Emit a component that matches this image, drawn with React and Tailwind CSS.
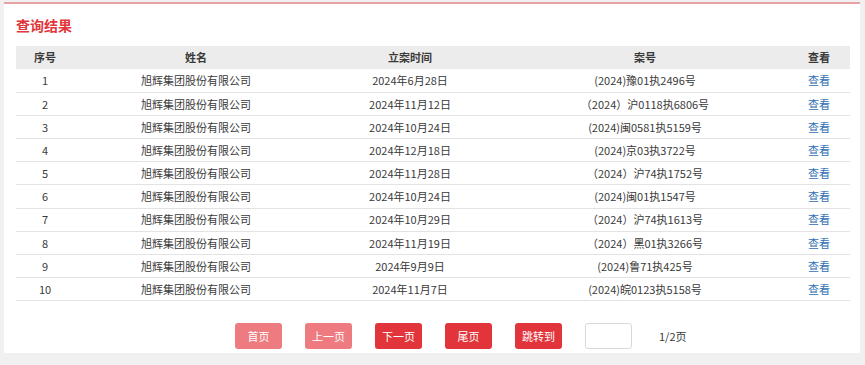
const rows = [
  ["1", "旭辉集团股份有限公司", "2024年6月28日", "(2024)豫01执2496号"],
  ["2", "旭辉集团股份有限公司", "2024年11月12日", "（2024）沪0118执6806号"],
  ["3", "旭辉集团股份有限公司", "2024年10月24日", "(2024)闽0581执5159号"],
  ["4", "旭辉集团股份有限公司", "2024年12月18日", "(2024)京03执3722号"],
  ["5", "旭辉集团股份有限公司", "2024年11月28日", "（2024）沪74执1752号"],
  ["6", "旭辉集团股份有限公司", "2024年10月24日", "(2024)闽01执1547号"],
  ["7", "旭辉集团股份有限公司", "2024年10月29日", "（2024）沪74执1613号"],
  ["8", "旭辉集团股份有限公司", "2024年11月19日", "（2024）黑01执3266号"],
  ["9", "旭辉集团股份有限公司", "2024年9月9日", "(2024)鲁71执425号"],
  ["10", "旭辉集团股份有限公司", "2024年11月7日", "(2024)皖0123执5158号"],
];

const pageButtons = [
  { label: "首页", disabled: true },
  { label: "上一页", disabled: true },
  { label: "下一页", disabled: false },
  { label: "尾页", disabled: false },
  { label: "跳转到", disabled: false },
];

export default function App() {
  return (
    <div
      className="h-[365px] w-[865px] overflow-hidden bg-[#f0f0f0] pl-1 pr-[5px] pt-[2px] text-[#3a3a3a]"
      style={{ fontFamily: '"Microsoft YaHei", "Noto Sans CJK SC", sans-serif' }}
    >
      <div className="h-[351px] border-t-2 border-[#e8a2a2] bg-white">
        <h2 className="pl-3 pt-[9px] text-[14px] font-bold leading-6 text-[#e0363c]">查询结果</h2>

        <table className="ml-3 mt-[9px] w-[834px] table-fixed border-collapse text-[11px]">
          <colgroup>
            <col className="w-[58px]" />
            <col className="w-[244px]" />
            <col className="w-[184px]" />
            <col className="w-[286px]" />
            <col className="w-[62px]" />
          </colgroup>
          <thead>
            <tr className="h-[23px] bg-[#ececec]">
              <th className="font-bold">序号</th>
              <th className="font-bold">姓名</th>
              <th className="font-bold">立案时间</th>
              <th className="font-bold">案号</th>
              <th className="font-bold">查看</th>
            </tr>
          </thead>
          <tbody>
            {rows.map((r) => (
              <tr key={r[0]} className="h-[23.2px] border-b border-[#e3e3e3] text-center">
                <td>{r[0]}</td>
                <td>{r[1]}</td>
                <td>{r[2]}</td>
                <td>{r[3]}</td>
                <td>
                  <a className="text-[#2f6fb3]">查看</a>
                </td>
              </tr>
            ))}
          </tbody>
        </table>

        <div className="mt-[22px] flex items-center pl-[231px]">
          {pageButtons.map((b) => (
            <button
              key={b.label}
              type="button"
              className={`mr-[23px] h-[26px] w-[47px] rounded-[3px] text-[11px] text-white ${
                b.disabled ? "bg-[#ee7b80]" : "bg-[#e1353b]"
              }`}
            >
              {b.label}
            </button>
          ))}
          <input type="text" className="h-[26px] w-[47px] rounded-[3px] border border-[#d9d9d9] bg-white" />
          <span className="ml-[27px] text-[11px]">1/2页</span>
        </div>
      </div>
    </div>
  );
}
